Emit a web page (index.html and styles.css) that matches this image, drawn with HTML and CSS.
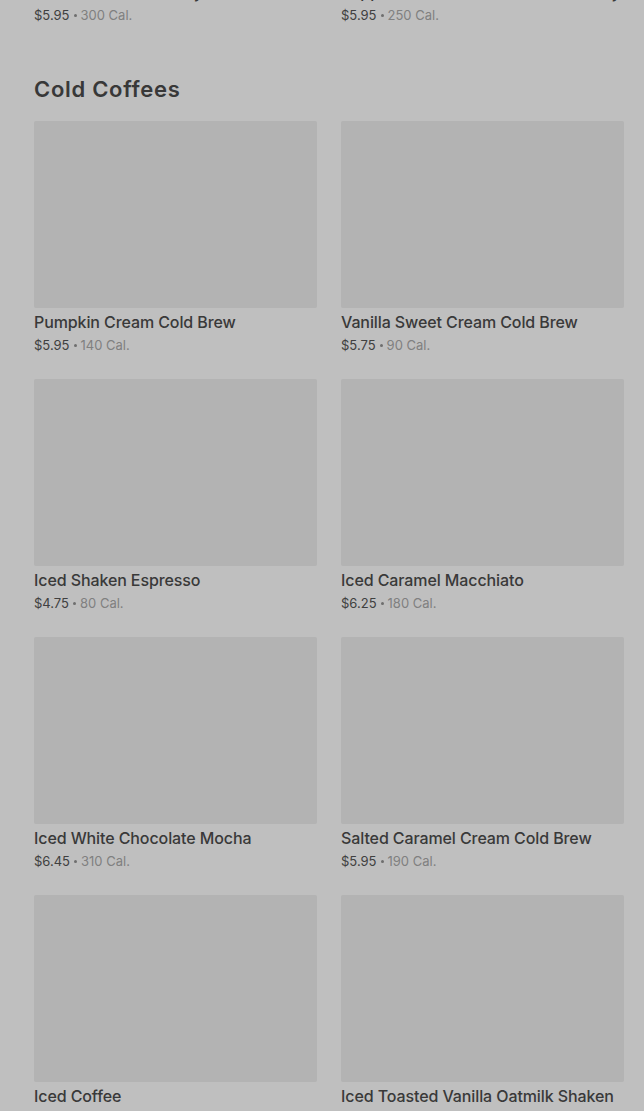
FILE: index.html
```html
<!DOCTYPE html>
<html>
<head>
<meta charset="utf-8">
<link rel="stylesheet" href="styles.css">
</head>
<body>
<div class="page">
  <div class="grid tail">
    <div class="card">
      <div class="name">Caramel Brulée Honey</div>
      <div class="meta"><span class="price">$5.95</span><span class="dot"></span><span class="cal">300 Cal.</span></div>
    </div>
    <div class="card">
      <div class="name">Peppermint White Chocolate Creamy</div>
      <div class="meta"><span class="price">$5.95</span><span class="dot"></span><span class="cal">250 Cal.</span></div>
    </div>
  </div>

  <h2 class="section-title">Cold Coffees</h2>

  <div class="grid">
    <div class="card"><div class="img"></div><div class="name">Pumpkin Cream Cold Brew</div><div class="meta"><span class="price">$5.95</span><span class="dot"></span><span class="cal">140 Cal.</span></div></div>
    <div class="card"><div class="img"></div><div class="name">Vanilla Sweet Cream Cold Brew</div><div class="meta"><span class="price">$5.75</span><span class="dot"></span><span class="cal">90 Cal.</span></div></div>
    <div class="card"><div class="img"></div><div class="name">Iced Shaken Espresso</div><div class="meta"><span class="price">$4.75</span><span class="dot"></span><span class="cal">80 Cal.</span></div></div>
    <div class="card"><div class="img"></div><div class="name">Iced Caramel Macchiato</div><div class="meta"><span class="price">$6.25</span><span class="dot"></span><span class="cal">180 Cal.</span></div></div>
    <div class="card"><div class="img"></div><div class="name">Iced White Chocolate Mocha</div><div class="meta"><span class="price">$6.45</span><span class="dot"></span><span class="cal">310 Cal.</span></div></div>
    <div class="card"><div class="img"></div><div class="name">Salted Caramel Cream Cold Brew</div><div class="meta"><span class="price">$5.95</span><span class="dot"></span><span class="cal">190 Cal.</span></div></div>
    <div class="card"><div class="img"></div><div class="name">Iced Coffee</div><div class="meta"><span class="price">$3.95</span><span class="dot"></span><span class="cal">80 Cal.</span></div></div>
    <div class="card"><div class="img"></div><div class="name">Iced Toasted Vanilla Oatmilk Shaken Espresso</div><div class="meta"><span class="price">$6.25</span><span class="dot"></span><span class="cal">200 Cal.</span></div></div>
  </div>
</div>
</body>
</html>
```

FILE: styles.css
```css
html, body {
  margin: 0;
  padding: 0;
  background: #bfbfbf;
}
body {
  font-family: Inter, Roboto, "Liberation Sans", Arial, sans-serif;
  color: #3a3a3a;
  overflow: hidden;
}
.page {
  margin-top: -20px;
  padding: 0 20px 0 34px;
}
.grid {
  display: grid;
  grid-template-columns: 1fr 1fr;
  column-gap: 24px;
  row-gap: 23px;
}
.img {
  height: 187px;
  background: #b3b3b3;
  border-radius: 2px;
}
.name {
  margin-top: 2px;
  font-size: 16px;
  line-height: 24px;
  font-weight: 500;
  color: #393939;
  letter-spacing: -0.1px;
}
.tail .name {
  margin-top: 0;
}
.meta {
  display: flex;
  align-items: center;
  gap: 4px;
  height: 22px;
  font-size: 13px;
  line-height: 22px;
}
.price {
  color: #404040;
}
.dot {
  width: 3px;
  height: 3px;
  border-radius: 50%;
  background: #6e6e6e;
}
.cal {
  color: #808080;
}
.section-title {
  margin: 49px 0 18px;
  height: 28px;
  font-family: Inter, "Open Sans", sans-serif;
  font-size: 22px;
  line-height: 28px;
  font-weight: 600;
  color: #383838;
  letter-spacing: 0.7px;
}
```
